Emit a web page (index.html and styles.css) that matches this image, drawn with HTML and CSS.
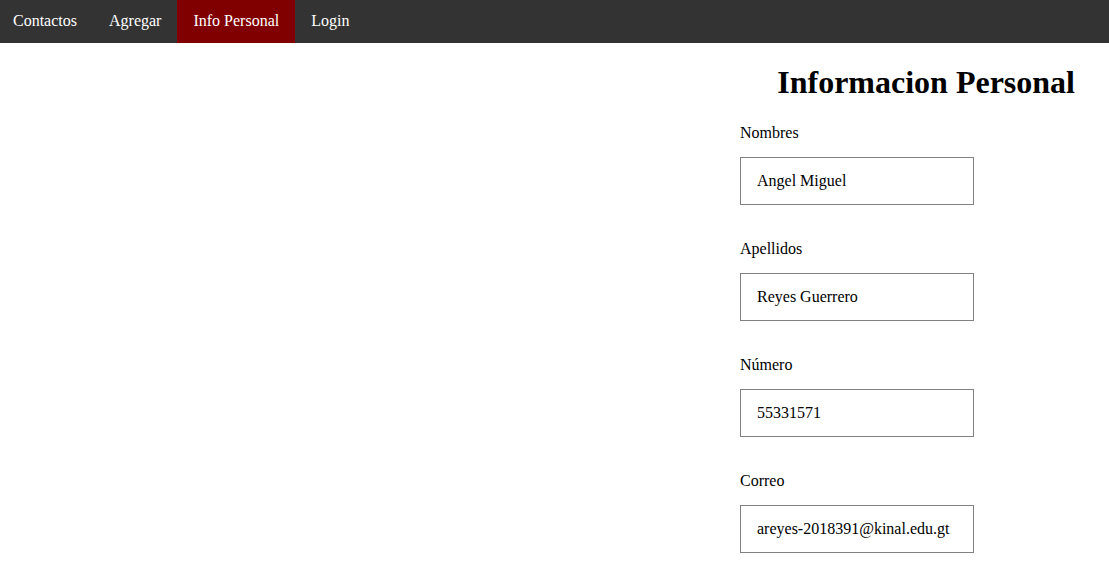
FILE: index.html
```html
<!DOCTYPE html>
<html lang="es">
<head>
<meta charset="utf-8">
<title>Informacion Personal</title>
<link rel="stylesheet" href="styles.css">
</head>
<body>
<nav class="topnav">
  <a class="nav-link" href="#">Contactos</a>
  <a class="nav-link" href="#">Agregar</a>
  <a class="nav-link active" href="#">Info Personal</a>
  <a class="nav-link" href="#">Login</a>
</nav>
<main class="page">
  <section class="info">
    <h1 class="title">Informacion Personal</h1>
    <form class="form">
      <label class="label" for="nombres">Nombres</label>
      <input class="field" id="nombres" type="text" value="Angel Miguel">
      <label class="label" for="apellidos">Apellidos</label>
      <input class="field" id="apellidos" type="text" value="Reyes Guerrero">
      <label class="label" for="numero">Número</label>
      <input class="field" id="numero" type="text" value="55331571">
      <label class="label" for="correo">Correo</label>
      <input class="field" id="correo" type="text" value="areyes-2018391@kinal.edu.gt">
    </form>
  </section>
</main>
</body>
</html>
```
FILE: styles.css
```css
* { box-sizing: border-box; }
html, body {
  margin: 0;
  padding: 0;
  background: #fff;
  font-family: "Liberation Serif", "Times New Roman", serif;
  font-size: 16px;
  color: #000;
}
.topnav {
  display: flex;
  height: 43px;
  background: #333333;
}
.nav-link {
  display: flex;
  align-items: center;
  padding: 0 16px 1px 13px;
  color: #fff;
  text-decoration: none;
  font-size: 16px;
}
.nav-link + .nav-link { padding-left: 16px; }
.nav-link.active { background: #800000; }
.page {
  display: flex;
  justify-content: flex-end;
}
.info {
  width: 369px;
  padding-right: 34px;
}
.title {
  margin: 21px 0 22px;
  font-size: 32px;
  font-weight: bold;
  text-align: right;
  line-height: 37px;
}
.form {
  display: flex;
  flex-direction: column;
  align-items: flex-start;
}
.label {
  display: block;
  line-height: 20px;
  margin-bottom: 14px;
}
.field {
  width: 234px;
  height: 48px;
  padding: 0 16px;
  border: 1px solid #808080;
  font-family: "Liberation Serif", "Times New Roman", serif;
  font-size: 16px;
  color: #000;
  margin: 0 0 34px;
  outline: none;
}
```
